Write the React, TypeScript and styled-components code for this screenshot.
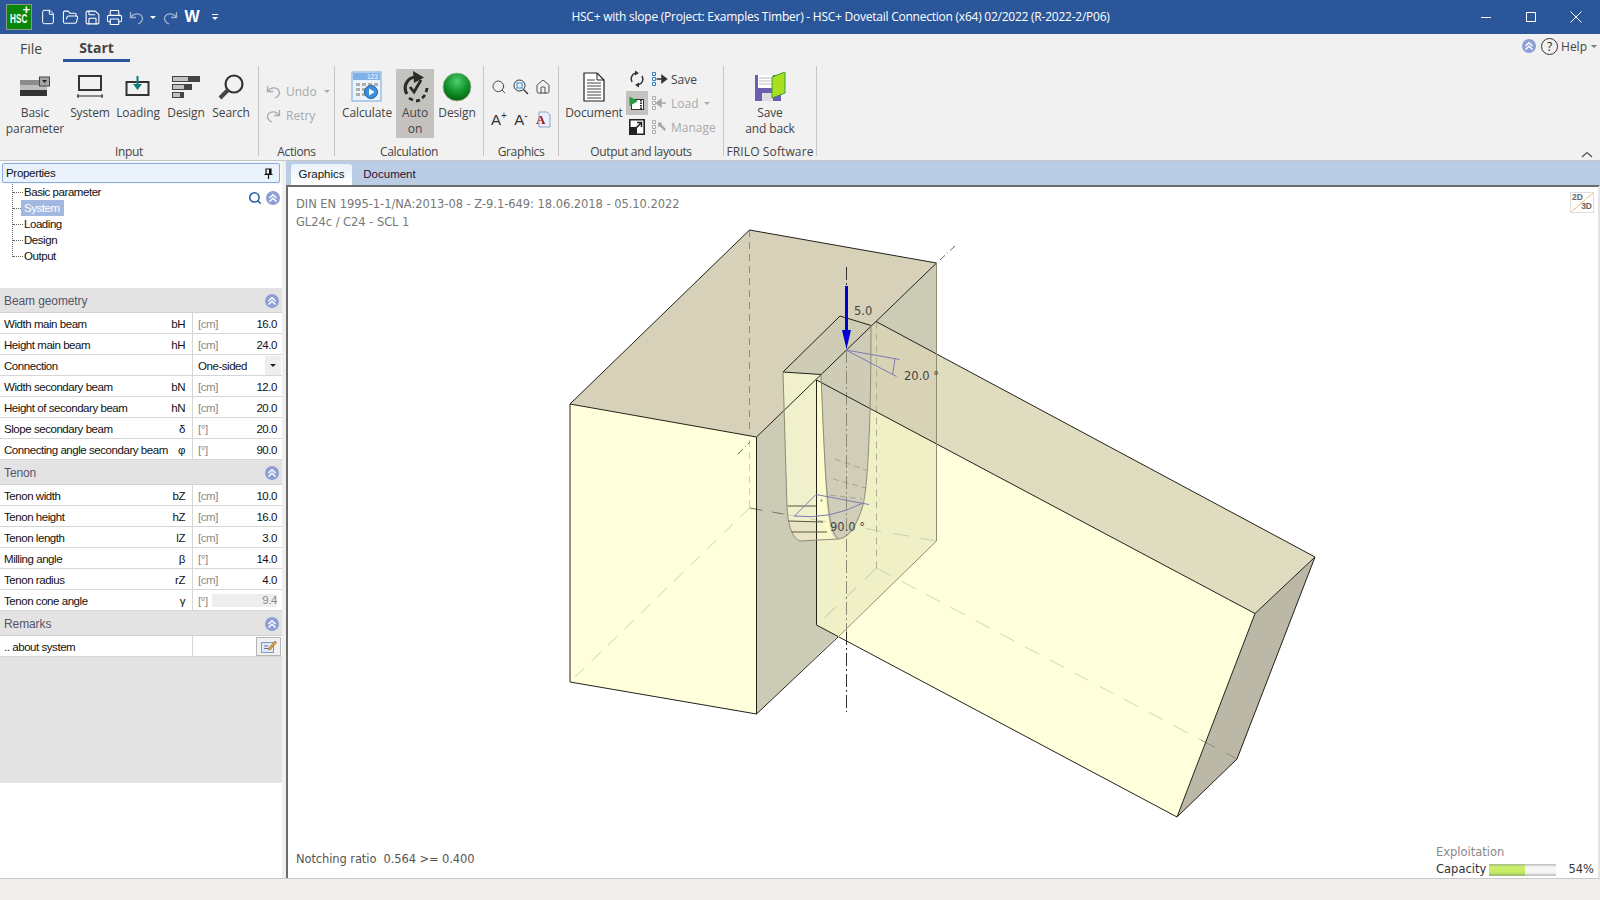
import React from "react";
import styled, { createGlobalStyle } from "styled-components";
import { File, FolderOpen, Save, Printer, Search, House } from "lucide-react";

const GlobalStyle = createGlobalStyle`
  html, body { margin: 0; padding: 0; background: #fff; overflow: hidden; }
  * { box-sizing: border-box; }
`;

const uiFont = `"Open Sans", "Liberation Sans", sans-serif`;
const gridFont = `"Liberation Sans", Arial, sans-serif`;
const plotFont = `"DejaVu Sans", sans-serif`;

const Page = styled.div`
  width: 1600px;
  height: 900px;
  display: flex;
  flex-direction: column;
  font-family: ${uiFont};
  color: #444;
`;

/* title bar */
const TitleBar = styled.div`
  height: 34px;
  background: #2b579a;
  display: flex;
  align-items: center;
  color: #fff;
  flex: none;
`;
const Logo = styled.div`
  width: 26px;
  height: 26px;
  margin-left: 6px;
  background: #0a870a;
  border: 1px solid #8a9a8a;
  display: flex;
  align-items: center;
  justify-content: center;
  position: relative;
  font: bold 12px ${gridFont};
  color: #fff;
  padding-top: 3px;
  &::after {
    content: "+";
    position: absolute;
    top: -3px;
    right: 1px;
    font-size: 13px;
  }
`;
const LogoText = styled.span`
  display: inline-block;
  transform: scaleX(0.68);
`;
const Quick = styled.div`
  display: flex;
  align-items: center;
  width: 186px;
  margin-left: 5px;
  height: 100%;
`;
const QuickBtn = styled.span<{ $dim?: boolean }>`
  display: flex;
  width: 22px;
  justify-content: center;
  opacity: ${(p) => (p.$dim ? 0.55 : 1)};
`;
const CaretSlot = styled.span`
  width: 12px;
  display: flex;
  justify-content: center;
`;
const Caret = styled.span<{ $c?: string; $ml?: number }>`
  width: 0;
  height: 0;
  border-left: 3px solid transparent;
  border-right: 3px solid transparent;
  border-top: 3px solid ${(p) => p.$c || "#fff"};
  display: inline-block;
  margin-left: ${(p) => p.$ml || 0}px;
  flex: none;
`;
const MenuCaret = styled(Caret)`
  position: relative;
  margin-left: 9px;
  margin-top: 2px;
  &::before {
    content: "";
    position: absolute;
    left: -3px;
    top: -6px;
    width: 6px;
    height: 1px;
    background: #fff;
  }
`;
const WordW = styled.span`
  font: bold 16px ${gridFont};
  width: 22px;
  text-align: center;
`;
const TitleText = styled.div`
  flex: 1;
  text-align: center;
  font-size: 12px;
  letter-spacing: -0.02em;
  padding: 0 5px 2px 0;
`;
const WinControls = styled.div`
  display: flex;
  flex: none;
  margin-right: 2px;
`;
const WinBtn = styled.span`
  width: 45px;
  display: flex;
  justify-content: center;
`;

/* tab strip */
const TabStrip = styled.div`
  height: 28px;
  background: #f1f1f1;
  display: flex;
  align-items: stretch;
  padding-left: 20px;
  flex: none;
`;
const TabFile = styled.div`
  font-size: 14px;
  width: 43px;
  display: flex;
  align-items: center;
  color: #444;
`;
const TabStart = styled.div`
  width: 67px;
  font-size: 14px;
  font-weight: 700;
  display: flex;
  align-items: center;
  justify-content: center;
  color: #444;
  padding-top: 2px;
  border-bottom: 3px solid #2b579a;
`;
const HelpArea = styled.div`
  margin-left: auto;
  display: flex;
  align-items: center;
  font-size: 12px;
  color: #444;
  gap: 3px;
  padding: 0 3px 4px 0;
`;
const HelpCircle = styled.span`
  width: 17px;
  height: 17px;
  margin-left: 2px;
  border-radius: 50%;
  border: 1px solid #333;
  display: flex;
  align-items: center;
  justify-content: center;
  font-size: 12px;
  color: #222;
`;

/* ribbon */
const Ribbon = styled.div`
  height: 99px;
  background: #f1f1f1;
  border-bottom: 1px solid #c6c6c6;
  display: flex;
  align-items: flex-start;
  flex: none;
  position: relative;
`;
const Group = styled.div<{ $w: number }>`
  width: ${(p) => p.$w}px;
  height: 98px;
  display: flex;
  flex-direction: column;
`;
const GroupBody = styled.div<{ $pl?: number }>`
  height: 82px;
  padding-top: 5px;
  padding-left: ${(p) => p.$pl || 0}px;
  display: flex;
`;
const GroupLabel = styled.div<{ $caps?: boolean }>`
  height: 16px;
  line-height: 16px;
  font-size: 12px;
  letter-spacing: ${(p) => (p.$caps ? "0.01em" : "-0.03em")};
  text-align: center;
  color: #444;
  white-space: nowrap;
`;
const RibbonSep = styled.div`
  width: 1px;
  height: 90px;
  margin-top: 4px;
  background: #c6c6c6;
  flex: none;
`;
const BigBtn = styled.div<{ $w: number; $active?: boolean }>`
  width: ${(p) => p.$w}px;
  height: 69px;
  margin-top: 2px;
  display: flex;
  flex-direction: column;
  align-items: center;
  background: ${(p) => (p.$active ? "#c4c2be" : "transparent")};
  flex: none;
`;
const BigIcon = styled.div`
  height: 36px;
  display: flex;
  align-items: center;
  justify-content: center;
`;
const BigLabel = styled.div`
  font-size: 12px;
  line-height: 16px;
  letter-spacing: -0.01em;
  text-align: center;
  white-space: pre-line;
  color: #444;
`;
const SmallCol = styled.div<{ $w?: number; $mt?: number }>`
  width: ${(p) => (p.$w ? `${p.$w}px` : "auto")};
  display: flex;
  flex-direction: column;
  margin-top: ${(p) => p.$mt || 0}px;
`;
const SmallRow = styled.div<{ $disabled?: boolean }>`
  height: 24px;
  display: flex;
  align-items: center;
  gap: 3px;
  font-size: 12px;
  color: ${(p) => (p.$disabled ? "#a9a9a9" : "#444")};
`;
const ActionRow = styled(SmallRow)`
  gap: 5px;
`;
const SmallSquare = styled.div<{ $active?: boolean }>`
  width: 22px;
  height: 24px;
  display: flex;
  align-items: center;
  justify-content: center;
  background: ${(p) => (p.$active ? "#c4c2be" : "transparent")};
`;
const LayoutCol = styled(SmallCol)`
  margin-left: 4px;
`;
const ToolGrid = styled.div`
  display: grid;
  grid-template-columns: repeat(3, 22px);
  grid-auto-rows: 32px;
  margin: 4px 0 0 4px;
  align-items: center;
  justify-items: center;
`;
const FontA = styled.span`
  font: 15px ${gridFont};
  color: #333;
  sup {
    font-size: 10px;
  }
`;
const CollapseBtn = styled.svg`
  position: absolute;
  right: 7px;
  bottom: 2px;
`;

/* body */
const Body = styled.div`
  flex: 1;
  display: flex;
  min-height: 0;
`;
const Side = styled.div`
  width: 282px;
  background: #fff;
  display: flex;
  flex-direction: column;
  flex: none;
`;
const PropsBar = styled.div`
  background: #f4f8fd;
  padding: 2px 2px 0;
  height: 23px;
`;
const PropsBox = styled.div`
  height: 20px;
  border: 1px solid #86abdc;
  border-radius: 2px;
  background: #eaf2fc;
  display: flex;
  align-items: center;
  justify-content: space-between;
  padding: 0 6px 0 3px;
  font: 11.5px ${gridFont};
  letter-spacing: -0.3px;
  color: #111;
`;
const TreeArea = styled.div`
  height: 104px;
  display: flex;
  justify-content: space-between;
  padding: 0 2px 0 12px;
`;
const TreeList = styled.div`
  border-left: 1px dotted #666;
  height: 73px;
  font: 11.5px ${gridFont};
  letter-spacing: -0.45px;
  color: #111;
`;
const TreeItem = styled.div<{ $sel?: boolean }>`
  height: 16px;
  display: flex;
  align-items: center;
  &::before {
    content: "";
    width: ${(p) => (p.$sel ? 8 : 10)}px;
    border-top: 1px dotted #666;
    margin-right: ${(p) => (p.$sel ? 0 : 1)}px;
  }
  span {
    padding: 0 ${(p) => (p.$sel ? "3px" : "0")};
    line-height: 16px;
    background: ${(p) => (p.$sel ? "#a3b8e0" : "transparent")};
    color: ${(p) => (p.$sel ? "#fff" : "#111")};
    min-width: ${(p) => (p.$sel ? "43px" : "auto")};
  }
`;
const TreeTools = styled.div`
  display: flex;
  align-items: center;
  gap: 4px;
  height: 28px;
`;
const SectionHead = styled.div`
  height: 25px;
  background: #e3e3e3;
  border-bottom: 1px solid #d3d3d3;
  display: flex;
  align-items: center;
  justify-content: space-between;
  padding: 2px 3px 0 4px;
  font: 12px ${gridFont};
  letter-spacing: -0.1px;
  color: #55556a;
`;
const Row = styled.div`
  height: 21px;
  display: grid;
  grid-template-columns: 193px 1fr;
  border-bottom: 1px solid #d6d6d6;
  font: 11.5px ${gridFont};
  letter-spacing: -0.45px;
  color: #111;
  white-space: nowrap;
`;
const RowLeft = styled.div`
  border-right: 1px solid #d6d6d6;
  display: flex;
  justify-content: space-between;
  align-items: center;
  padding: 1px 7px 0 4px;
`;
const RowRight = styled.div`
  display: flex;
  justify-content: space-between;
  align-items: center;
  padding: 1px 5px 0;
`;
const Unit = styled.span`
  color: #8a8a8a;
`;
const ComboText = styled.span`
  color: #111;
`;
const DerivedValue = styled.span`
  width: 65px;
  height: 13px;
  background: #eeeeee;
  color: #888;
  text-align: right;
  line-height: 13px;
`;
const ComboBtn = styled.span`
  width: 16px;
  height: 19px;
  background: #eeeeee;
  margin-right: -4px;
  display: flex;
  align-items: center;
  justify-content: center;
`;
const EditBtn = styled.span`
  width: 25px;
  height: 19px;
  border: 1px solid #b5b5b5;
  background: #f0f0f0;
  margin-right: -4px;
  display: flex;
  align-items: center;
  justify-content: center;
`;
const Filler = styled.div`
  height: 126px;
  background: #e3e3e3;
`;
const Splitter = styled.div`
  width: 4px;
  background: #f0f0f0;
  flex: none;
`;
const Work = styled.div`
  flex: 1;
  display: flex;
  flex-direction: column;
  background: #bacde4;
`;
const DocTabs = styled.div`
  height: 24px;
  display: flex;
  align-items: flex-end;
  padding-left: 5px;
  font: 11.5px ${gridFont};
  color: #111;
`;
const DocTab = styled.div<{ $active?: boolean }>`
  height: 21px;
  width: ${(p) => (p.$active ? "61px" : "75px")};
  display: flex;
  align-items: center;
  justify-content: center;
  padding-bottom: 2px;
  border-radius: 3px 3px 0 0;
  background: ${(p) => (p.$active ? "linear-gradient(#e9f1fb, #fff)" : "transparent")};
  color: ${(p) => (p.$active ? "#111" : "#301030")};
`;
const Canvas = styled.div`
  flex: 1;
  background: #fff;
  border-top: 2px solid #6b6b6b;
  border-left: 2px solid #6b6b6b;
  border-right: 2px solid #e4e4e4;
  position: relative;
  display: flex;
  flex-direction: column;
  justify-content: space-between;
  padding: 8px 4px 0 8px;
  font: 11.5px ${plotFont};
  color: #777;
`;
const Drawing = styled.svg`
  position: absolute;
  left: 0;
  top: 0;
`;
const PlotNotes = styled.div`
  position: relative;
  line-height: 18px;
  letter-spacing: -0.05px;
`;
const PlotFoot = styled.div`
  position: relative;
  display: flex;
  justify-content: space-between;
  align-items: flex-end;
  color: #555;
`;
const Ratio = styled.span`
  margin-bottom: 12px;
  letter-spacing: -0.1px;
`;
const Exploit = styled.div`
  line-height: 17px;
  width: 158px;
  color: #888;
`;
const CapRow = styled.div`
  display: flex;
  align-items: center;
  color: #333;
`;
const CapLabel = styled.span`
  width: 53px;
`;
const CapValue = styled.span`
  margin-left: 12px;
`;
const Bar = styled.div`
  width: 68px;
  height: 12px;
  background: linear-gradient(#bbb, #f6f6f6 25%, #f6f6f6 70%, #bbb);
`;
const BarFill = styled.div`
  height: 100%;
  background: linear-gradient(#a6b98a, #cdf06c 25%, #c4ec62 70%, #9ab36e);
`;
const View23 = styled.div`
  position: absolute;
  right: 4px;
  top: 5px;
  width: 24px;
  height: 21px;
  border: 1px solid #ddd;
  background: linear-gradient(to bottom right, #fff 48%, #f3c684 49%, #f3c684 51%, #fff 52%);
  font: bold 8.500px ${gridFont};
  color: #666;
  padding: 0 1px;
  line-height: 9px;
  display: flex;
  flex-direction: column;
  span:last-child {
    align-self: flex-end;
  }
`;
const StatusBar = styled.div`
  height: 22px;
  background: #f0efed;
  border-top: 1px solid #c9c9c9;
  flex: none;
`;

const Chevrons = ({ size = 14 }: { size?: number }) => (
  <svg width={size} height={size} viewBox="0 0 14 14" style={{ flex: "none" }}>
    <circle cx="7" cy="7" r="7" fill="#8e9fd8" />
    <path d="M3.500 7 7 3.800 10.500 7M3.500 10.500 7 7.300 10.500 10.500" fill="none" stroke="#fff" strokeWidth="1.500" />
  </svg>
);

// the office-style curved arrow: an L-shaped head on a wide arc
const UndoIcon = ({ flip }: { flip?: boolean }) => (
  <svg width="15" height="15" viewBox="0 0 15 15" style={flip ? { transform: "scaleX(-1)" } : undefined}>
    <path d="M1.500 2v5.500H7M1.500 7.500C4 3 10.500 2.500 13 6.500 14.500 9.500 12.500 12.500 9 14" fill="none" stroke="currentColor" strokeWidth="1.300" />
  </svg>
);

const BasicIcon = () => (
  <svg width="32" height="22" viewBox="0 0 32 22">
    <rect x="1" y="4" width="27" height="5" fill="#8c8c8c" />
    <rect x="1" y="9" width="27" height="5" fill="#bdbdbd" />
    <rect x="1" y="14" width="27" height="6" fill="#333" />
    <rect x="20.500" y="1" width="10" height="9" fill="#a5a5a5" stroke="#444" />
    <path d="M23 4h5l-2.500 3z" fill="#222" />
  </svg>
);
const SystemIcon = () => (
  <svg width="28" height="26" viewBox="0 0 28 26">
    <rect x="3" y="2" width="22" height="14" fill="none" stroke="#333" strokeWidth="2" />
    <path d="M1 22h26M2 20v4M26 20v4" stroke="#222" strokeWidth="1" />
  </svg>
);
const LoadingIcon = () => (
  <svg width="26" height="24" viewBox="0 0 26 24">
    <rect x="1.500" y="7" width="22" height="13" fill="none" stroke="#333" strokeWidth="2" />
    <path d="M11.500 1h2v8h3.500l-4.500 6-4.500-6h3.500z" fill="#0d8080" />
  </svg>
);
const DesignBarsIcon = () => (
  <svg width="30" height="24" viewBox="0 0 30 24">
    <rect x="1" y="1" width="28" height="6" fill="#444" />
    <rect x="2" y="2" width="15" height="4" fill="#c2c2c2" />
    <rect x="1" y="9" width="20" height="6" fill="#444" />
    <rect x="2" y="10" width="11" height="4" fill="#c2c2c2" />
    <rect x="1" y="17" width="12" height="6" fill="#444" />
    <rect x="2" y="18" width="7" height="4" fill="#c2c2c2" />
  </svg>
);
const SearchBigIcon = () => (
  <svg width="28" height="28" viewBox="0 0 28 28">
    <circle cx="17" cy="11" r="8.500" fill="none" stroke="#333" strokeWidth="2.200" />
    <path d="M11 17 3 25" stroke="#444" strokeWidth="4" />
  </svg>
);
const CalcIcon = () => (
  <svg width="32" height="32" viewBox="0 0 32 32">
    <rect x="1" y="1" width="29" height="29" fill="#eaf2fb" stroke="#7aa6dc" />
    <rect x="2" y="2" width="27" height="7" fill="#7fb0e8" />
    <text x="16" y="8" fontSize="6.500" fontFamily="Liberation Sans" fill="#fff">123</text>
    <path d="M5 12h4v3H5zM11 12h4v3h-4zM17 12h4v3h-4zM23 12h4v3h-4zM5 17h4v3H5zM11 17h4v3h-4zM5 22h4v3H5zM11 22h4v3h-4z" fill="#b0b0a8" />
    <circle cx="20" cy="21" r="6.500" fill="#3f8fd8" stroke="#1d5fa8" />
    <path d="M18 17.500v7l5.500-3.500z" fill="#fff" />
  </svg>
);
const AutoIcon = () => (
  <svg width="30" height="32" viewBox="0 0 30 32">
    <path d="M16 6A11 11 0 0 0 7 23" fill="none" stroke="#2a2a2a" strokeWidth="3.200" />
    <path d="M13 0 24 6.500 14 12z" fill="#2a2a2a" />
    <path d="M10 16l4 5 7-12" fill="none" stroke="#2a2a2a" strokeWidth="2.800" />
    <path d="M9 27a11 11 0 0 0 4 2M16 30a11 11 0 0 0 4-1M22 27a11 11 0 0 0 3-3M26 21a11 11 0 0 0 1-4" fill="none" stroke="#2a2a2a" strokeWidth="2.800" />
  </svg>
);
const GreenBall = () => (
  <svg width="30" height="30" viewBox="0 0 30 30">
    <defs>
      <radialGradient id="ball" cx="0.500" cy="0.300" r="0.650">
        <stop offset="0" stopColor="#52cc70" />
        <stop offset="0.600" stopColor="#10952d" />
        <stop offset="1" stopColor="#0b6a12" />
      </radialGradient>
    </defs>
    <circle cx="15" cy="15" r="14" fill="url(#ball)" stroke="#a5b5a0" strokeWidth="0.800" />
  </svg>
);
const DocIcon = () => (
  <svg width="24" height="30" viewBox="0 0 24 30">
    <path d="M2 1h13l7 7v21H2z" fill="#fff" stroke="#222" strokeWidth="1.200" />
    <path d="M15 1v7h7" fill="none" stroke="#222" />
    <path d="M5 8h8M5 11h14M5 14h14M5 17h14M5 20h14M5 23h14M5 26h14" stroke="#444" strokeWidth="1" />
  </svg>
);
const LoopIcon = () => (
  <svg width="16" height="18" viewBox="0 0 16 18">
    <path d="M3 12a6 6 0 0 1 4-9M13 6a6 6 0 0 1-4 9" fill="none" stroke="#333" strokeWidth="1.500" />
    <path d="M6 0.500 10 3 6 5.500zM10 12.500 6 15l4 2.500z" fill="#333" />
  </svg>
);
const PlayFilmIcon = () => (
  <svg width="16" height="15" viewBox="0 0 16 15">
    <rect x="2.500" y="3.500" width="12" height="10" fill="#fff" stroke="#333" />
    <path d="M12 4v9" stroke="#333" strokeDasharray="1.500 1" strokeWidth="2" />
    <path d="M0.500 0.500 9 5 0.500 10z" fill="#2a9a3c" />
  </svg>
);
const ExpandIcon = () => (
  <svg width="16" height="16" viewBox="0 0 16 16">
    <path d="M0.800 0.800h14.400v14.400H0.800z" fill="#fff" stroke="#222" strokeWidth="1.600" />
    <rect x="1" y="8" width="7" height="7" fill="#222" />
    <path d="M7 9l5-5M8 3.500h4.500V8" fill="none" stroke="#222" strokeWidth="1.500" />
  </svg>
);
const LayoutRowIcon = ({ arrow, dim }: { arrow: "out" | "in" | "wrench"; dim?: boolean }) => {
  const c = dim ? "#a9a9a9" : "#333";
  const dot = dim ? "#a9a9a9" : "#2b7fc8";
  return (
    <svg width="16" height="15" viewBox="0 0 16 15">
      <path d="M0.500 0.500h3v3h-3zM0.500 5.500h3v3h-3zM0.500 10.500h3v3h-3z" fill="#fff" stroke={dot} />
      {arrow === "out" && <path d="M4.500 7h7M10 3.500 14.500 7 10 10.500z" stroke={c} fill={c} strokeWidth="1.500" />}
      {arrow === "in" && <path d="M14 7H8M9 3.500 4.500 7 9 10.500z" stroke={c} fill={c} strokeWidth="1.500" />}
      {arrow === "wrench" && <path d="M6 3 9 2 10 5 14 9 12.500 11 8.500 7 6 6.500z" fill={c} />}
    </svg>
  );
};
const FloppyIcon = () => (
  <svg width="32" height="30" viewBox="0 0 32 30">
    <path d="M1 3h26v26H1z" fill="#6a5fb0" />
    <rect x="4" y="3" width="15" height="13" fill="#fff" />
    <path d="M5 6h12M5 9h12M5 12h12" stroke="#bbb" />
    <rect x="8" y="21" width="11" height="8" fill="#ddd" />
    <path d="M18 5 31 0v21l-13 5z" fill="#a8e020" stroke="#3c9a3c" />
  </svg>
);
const PinIcon = () => (
  <svg width="9" height="11" viewBox="0 0 9 11">
    <path d="M2 1h5v5H2zM0.500 6.500h8M4.500 6.500V11" fill="none" stroke="#111" strokeWidth="1.200" />
    <rect x="5" y="1" width="2" height="5" fill="#111" />
  </svg>
);
const EditIcon = () => (
  <svg width="16" height="13" viewBox="0 0 16 13">
    <rect x="0.500" y="2.500" width="12" height="10" fill="#dfe8f5" stroke="#7a9cc8" />
    <path d="M3 6h4M3 8.500h4" stroke="#5577aa" />
    <path d="M7 9 14 1l1.500 1.500L9 10z" fill="#e8a030" stroke="#664422" strokeWidth="0.500" />
  </svg>
);

interface RowData {
  label: string;
  sym: string;
  unit: string;
  value: string;
}

const beamRows: RowData[] = [
  { label: "Width main beam", sym: "bH", unit: "[cm]", value: "16.0" },
  { label: "Height main beam", sym: "hH", unit: "[cm]", value: "24.0" },
];
const beamRows2: RowData[] = [
  { label: "Width secondary beam", sym: "bN", unit: "[cm]", value: "12.0" },
  { label: "Height of secondary beam", sym: "hN", unit: "[cm]", value: "20.0" },
  { label: "Slope secondary beam", sym: "δ", unit: "[°]", value: "20.0" },
  { label: "Connecting angle secondary beam", sym: "φ", unit: "[°]", value: "90.0" },
];
const tenonRows: RowData[] = [
  { label: "Tenon width", sym: "bZ", unit: "[cm]", value: "10.0" },
  { label: "Tenon height", sym: "hZ", unit: "[cm]", value: "16.0" },
  { label: "Tenon length", sym: "lZ", unit: "[cm]", value: "3.0" },
  { label: "Milling angle", sym: "β", unit: "[°]", value: "14.0" },
  { label: "Tenon radius", sym: "rZ", unit: "[cm]", value: "4.0" },
];

const ValueRow = ({ row }: { row: RowData }) => (
  <Row>
    <RowLeft>
      <span>{row.label}</span>
      <span>{row.sym}</span>
    </RowLeft>
    <RowRight>
      <Unit>{row.unit}</Unit>
      <span>{row.value}</span>
    </RowRight>
  </Row>
);

// page coordinates, so the numbers can be read straight off the screenshot
const Model = () => (
  <Drawing width="1312" height="691" viewBox="288 187 1312 691">
    <g stroke="none">
      <polygon points="570,404 756.500,437 756.500,714 570,682" fill="#ffffdc" />
      <polygon points="749.500,230 936.500,263 756.500,437 570,404" fill="#d6d1b8" />
      <polygon points="756.500,437 936.500,263 936.500,541 756.500,714" fill="#cccbb5" />
      <polygon points="783,372 840,316 871,325.500 821,374.500" fill="#cfccb6" />
    </g>
    <g fill="none" strokeDasharray="13 10">
      <path d="M749.500 508 570 682" stroke="#cfcfb8" />
      <path d="M749.500 508 786 514.500" stroke="#77756a" />
    </g>
    <path d="M749.500 230V432" stroke="#8f8c78" strokeDasharray="7 5" fill="none" />
    <path d="M749.500 440V508" stroke="#cfcfb8" strokeDasharray="7 5" fill="none" />
    <g stroke="none">
      <path d="M783 372 821 374.500C826 500 828 528 838 539L800 541C792 538 788 525 787 507Z" fill="#f1f0cd" />
      <path d="M788.500 521 823 522C824 528 830 535 838 539L800 541C793 538 790 530 788.500 521Z" fill="#e8e4c4" />
    </g>
    <g stroke="none">
      <polygon points="816.500,380 1255,613.500 1177,817 816.500,625" fill="#ffffcd" fillOpacity="0.7" />
      <polygon points="876,321.500 1315,557 1255,613.500 816.500,380" fill="#dad5b3" fillOpacity="0.83" />
      <polygon points="1255,613.500 1315,557 1237,759 1177,817" fill="#bbb8a7" />
      <path d="M821 374.500 871 325.500C871 400 869 480 863 505 858 525 850 540 838 539 826 538 826 500 821 374.500Z" fill="#cdcbb6" fillOpacity="0.92" />
    </g>
    <g fill="none" strokeDasharray="16 12">
      <path d="M936.500 541 783 514" stroke="#cdcdb2" />
      <path d="M876.500 568 1201 740" stroke="#d2d2ba" />
      <path d="M1201 740 1237 759" stroke="#8f8d7c" />
      <path d="M876.500 568 817 625" stroke="#c5c5aa" />
    </g>
    <path d="M876.500 321.500V568" stroke="#b0ae90" strokeDasharray="7 5" fill="none" />
    <path d="M835 459 866 470M833 479 866 488M830 495 862 499" stroke="#a6a48c" strokeDasharray="6 4" fill="none" />
    <path d="M738 454 750 442M940 260 955 246" stroke="#666" strokeDasharray="7 3 1 3" fill="none" />
    <g fill="none" strokeDasharray="13 3 2 3">
      <path d="M846.500 267V350" stroke="#333" />
      <path d="M846.500 350V632" stroke="#8d8b74" />
      <path d="M846.500 632V712" stroke="#333" />
    </g>
    <g fill="none" stroke="#22221a" strokeWidth="1">
      <path d="M570 404 749.500 230 936.500 263 756.500 437Z" />
      <path d="M570 404V682L756.500 714 838 637" />
      <path d="M756.500 437V714" />
      <path d="M783 372 840 316 871 325.500M783 372 821 374.500" />
      <path d="M816.500 380V625L1177 817 1255 613.500 816.500 380" />
      <path d="M876 321.500 1315 557 1255 613.500M1315 557 1237 759 1177 817" />
    </g>
    <g fill="none" stroke="#8d8b74" strokeWidth="1">
      <path d="M936.500 263V541L838 637" />
      <path d="M783 372 787 507C788 525 792 538 800 541L838 539C850 538 858 522 863 505 869 480 871 400 871 325.500" />
      <path d="M821 374.500C826 500 828 528 838 539" />
      <path d="M787.500 506 816 506M788.500 521 823 522M791.500 532 827 532" stroke="#55553f" />
    </g>
    <g fill="none" stroke="#7c7cb4" strokeWidth="1">
      <path d="M846 350 899.500 359.500M846 350 896.500 376.500M895 359 892.500 375" />
      <path d="M816 494.500 869 504.500M816 494.500 794.500 516M794.500 516Q830 520 863 503" />
    </g>
    <circle cx="821.500" cy="500.500" r="1" fill="#6a6aaa" />
    <path d="M845 286h3v44h-3z" fill="#0000d0" />
    <path d="M842 330h9L846.500 349z" fill="#0000d0" />
    <g fontFamily={plotFont} fontSize="11.500" fill="#444">
      <text x="854" y="315">5.0</text>
      <text x="904" y="380">20.0 °</text>
      <text x="830" y="531">90.0 °</text>
    </g>
  </Drawing>
);

export default function App() {
  return (
    <Page>
      <GlobalStyle />
      <TitleBar>
        <Logo><LogoText>HSC</LogoText></Logo>
        <Quick>
          <QuickBtn><File size={16} strokeWidth={1.5} /></QuickBtn>
          <QuickBtn><FolderOpen size={17} strokeWidth={1.5} /></QuickBtn>
          <QuickBtn><Save size={17} strokeWidth={1.5} /></QuickBtn>
          <QuickBtn><Printer size={17} strokeWidth={1.5} /></QuickBtn>
          <QuickBtn $dim><UndoIcon /></QuickBtn>
          <CaretSlot><Caret /></CaretSlot>
          <QuickBtn $dim><UndoIcon flip /></QuickBtn>
          <WordW>W</WordW>
          <MenuCaret />
        </Quick>
        <TitleText>HSC+ with slope (Project: Examples Timber) - HSC+ Dovetail Connection (x64) 02/2022 (R-2022-2/P06)</TitleText>
        <WinControls>
          <WinBtn>
            <svg width="12" height="12" viewBox="0 0 12 12"><path d="M1 6.500h10" stroke="#fff" /></svg>
          </WinBtn>
          <WinBtn>
            <svg width="12" height="12" viewBox="0 0 12 12"><rect x="1.500" y="1.500" width="9" height="9" fill="none" stroke="#fff" /></svg>
          </WinBtn>
          <WinBtn>
            <svg width="12" height="12" viewBox="0 0 12 12"><path d="M0.500 0.500l11 11M11.500 0.500l-11 11" stroke="#fff" /></svg>
          </WinBtn>
        </WinControls>
      </TitleBar>

      <TabStrip>
        <TabFile>File</TabFile>
        <TabStart>Start</TabStart>
        <HelpArea>
          <Chevrons />
          <HelpCircle>?</HelpCircle>
          Help
          <Caret $c="#777" $ml={1} />
        </HelpArea>
      </TabStrip>

      <Ribbon>
        <Group $w={258}>
          <GroupBody>
            <BigBtn $w={70}><BigIcon><BasicIcon /></BigIcon><BigLabel>{"Basic\nparameter"}</BigLabel></BigBtn>
            <BigBtn $w={40}><BigIcon><SystemIcon /></BigIcon><BigLabel>System</BigLabel></BigBtn>
            <BigBtn $w={56}><BigIcon><LoadingIcon /></BigIcon><BigLabel>Loading</BigLabel></BigBtn>
            <BigBtn $w={40}><BigIcon><DesignBarsIcon /></BigIcon><BigLabel>Design</BigLabel></BigBtn>
            <BigBtn $w={50}><BigIcon><SearchBigIcon /></BigIcon><BigLabel>Search</BigLabel></BigBtn>
          </GroupBody>
          <GroupLabel>Input</GroupLabel>
        </Group>
        <RibbonSep />
        <Group $w={75}>
          <GroupBody $pl={7}>
            <SmallCol $mt={12}>
              <ActionRow $disabled><UndoIcon />Undo<Caret $c="#aaa" $ml={2} /></ActionRow>
              <ActionRow $disabled><UndoIcon flip />Retry</ActionRow>
            </SmallCol>
          </GroupBody>
          <GroupLabel>Actions</GroupLabel>
        </Group>
        <RibbonSep />
        <Group $w={148}>
          <GroupBody $pl={3}>
            <BigBtn $w={58}><BigIcon><CalcIcon /></BigIcon><BigLabel>Calculate</BigLabel></BigBtn>
            <BigBtn $w={38} $active><BigIcon><AutoIcon /></BigIcon><BigLabel>{"Auto\non"}</BigLabel></BigBtn>
            <BigBtn $w={46}><BigIcon><GreenBall /></BigIcon><BigLabel>Design</BigLabel></BigBtn>
          </GroupBody>
          <GroupLabel>Calculation</GroupLabel>
        </Group>
        <RibbonSep />
        <Group $w={74}>
          <GroupBody>
            <ToolGrid>
              <Search size={16} strokeWidth={1.3} color="#333" />
              <svg width="16" height="16" viewBox="0 0 16 16">
                <circle cx="6.500" cy="6.500" r="5.500" fill="none" stroke="#333" />
                <rect x="4" y="4" width="5" height="5" fill="none" stroke="#2b8fd8" />
                <path d="M10.500 10.500 15 15" stroke="#333" strokeWidth="1.300" />
              </svg>
              <House size={16} strokeWidth={1.3} color="#333" />
              <FontA>A<sup>+</sup></FontA>
              <FontA>A<sup>-</sup></FontA>
              <svg width="16" height="17" viewBox="0 0 16 17">
                <path d="M4 1h8l3 3v12H4z" fill="#e8f0fb" stroke="#8aa4c8" />
                <text x="1" y="13" fontSize="13" fontWeight="700" fontFamily="Liberation Serif" fill="#a01818">A</text>
              </svg>
            </ToolGrid>
          </GroupBody>
          <GroupLabel>Graphics</GroupLabel>
        </Group>
        <RibbonSep />
        <Group $w={164}>
          <GroupBody $pl={3}>
            <BigBtn $w={64}><BigIcon><DocIcon /></BigIcon><BigLabel>Document</BigLabel></BigBtn>
            <SmallCol $w={22}>
              <SmallSquare><LoopIcon /></SmallSquare>
              <SmallSquare $active><PlayFilmIcon /></SmallSquare>
              <SmallSquare><ExpandIcon /></SmallSquare>
            </SmallCol>
            <LayoutCol>
              <SmallRow><LayoutRowIcon arrow="out" />Save</SmallRow>
              <SmallRow $disabled><LayoutRowIcon arrow="in" dim />Load<Caret $c="#aaa" $ml={2} /></SmallRow>
              <SmallRow $disabled><LayoutRowIcon arrow="wrench" dim />Manage</SmallRow>
            </LayoutCol>
          </GroupBody>
          <GroupLabel>Output and layouts</GroupLabel>
        </Group>
        <RibbonSep />
        <Group $w={92}>
          <GroupBody>
            <BigBtn $w={92}><BigIcon><FloppyIcon /></BigIcon><BigLabel>{"Save\nand back"}</BigLabel></BigBtn>
          </GroupBody>
          <GroupLabel $caps>FRILO Software</GroupLabel>
        </Group>
        <RibbonSep />
        <CollapseBtn width="12" height="7" viewBox="0 0 12 7">
          <path d="M1 6 6 1.500 11 6" fill="none" stroke="#555" strokeWidth="1.300" />
        </CollapseBtn>
      </Ribbon>

      <Body>
        <Side>
          <PropsBar>
            <PropsBox>
              Properties
              <PinIcon />
            </PropsBox>
          </PropsBar>
          <TreeArea>
            <TreeList>
              <TreeItem><span>Basic parameter</span></TreeItem>
              <TreeItem $sel><span>System</span></TreeItem>
              <TreeItem><span>Loading</span></TreeItem>
              <TreeItem><span>Design</span></TreeItem>
              <TreeItem><span>Output</span></TreeItem>
            </TreeList>
            <TreeTools>
              <Search size={14} strokeWidth={2.6} color="#1f5f9f" />
              <Chevrons />
            </TreeTools>
          </TreeArea>

          <SectionHead>Beam geometry<Chevrons /></SectionHead>
          {beamRows.map((r) => <ValueRow key={r.label} row={r} />)}
          <Row>
            <RowLeft>Connection</RowLeft>
            <RowRight>
              <ComboText>One-sided</ComboText>
              <ComboBtn><Caret $c="#222" /></ComboBtn>
            </RowRight>
          </Row>
          {beamRows2.map((r) => <ValueRow key={r.label} row={r} />)}

          <SectionHead>Tenon<Chevrons /></SectionHead>
          {tenonRows.map((r) => <ValueRow key={r.label} row={r} />)}
          <Row>
            <RowLeft><span>Tenon cone angle</span><span>γ</span></RowLeft>
            <RowRight><Unit>[°]</Unit><DerivedValue>9.4</DerivedValue></RowRight>
          </Row>

          <SectionHead>Remarks<Chevrons /></SectionHead>
          <Row>
            <RowLeft>.. about system</RowLeft>
            <RowRight><span /><EditBtn><EditIcon /></EditBtn></RowRight>
          </Row>
          <Filler />
        </Side>
        <Splitter />
        <Work>
          <DocTabs>
            <DocTab $active>Graphics</DocTab>
            <DocTab>Document</DocTab>
          </DocTabs>
          <Canvas>
            <Model />
            <PlotNotes>
              <div>DIN EN 1995-1-1/NA:2013-08 - Z-9.1-649: 18.06.2018 - 05.10.2022</div>
              <div>GL24c / C24 - SCL 1</div>
            </PlotNotes>
            <View23>
              <span>2D</span>
              <span>3D</span>
            </View23>
            <PlotFoot>
              <Ratio>Notching ratio&nbsp; 0.564 &gt;= 0.400</Ratio>
              <Exploit>
                Exploitation
                <CapRow>
                  <CapLabel>Capacity</CapLabel>
                  <Bar><BarFill style={{ width: "54%" }} /></Bar>
                  <CapValue>54%</CapValue>
                </CapRow>
              </Exploit>
            </PlotFoot>
          </Canvas>
        </Work>
      </Body>
      <StatusBar />
    </Page>
  );
}
